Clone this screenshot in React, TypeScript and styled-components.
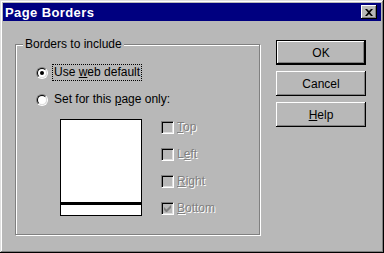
import React from 'react';
import styled, { createGlobalStyle } from 'styled-components';

const GlobalStyle = createGlobalStyle`
  html, body {
    margin: 0;
    padding: 0;
    background: #b8b8b8;
  }
  body {
    font-family: "Liberation Sans", Arial, sans-serif;
    font-size: 12px;
    color: #000;
  }
`;

// 창 전체 (Win95 스타일 테두리)
const Window = styled.div`
  width: 384px;
  height: 253px;
  box-sizing: border-box;
  padding: 3px;
  background: #b8b8b8;
  box-shadow: inset -1px -1px #000, inset 1px 1px #dfdfdf, inset -2px -2px #808080,
    inset 2px 2px #fff;
  display: flex;
  flex-direction: column;
`;

const TitleBar = styled.div`
  height: 18px;
  background: #000080;
  display: flex;
  align-items: center;
  justify-content: space-between;
  padding: 0 4px 0 2px;
`;

const Title = styled.span`
  color: #fff;
  font-weight: bold;
  font-size: 13px;
  letter-spacing: 0.4px;
`;

const CloseButton = styled.div`
  width: 16px;
  height: 14px;
  box-sizing: border-box;
  background: #b8b8b8;
  box-shadow: inset -1px -1px #000, inset 1px 1px #fff, inset -2px -2px #808080;
  display: flex;
  align-items: center;
  justify-content: center;
`;

const Body = styled.div`
  flex: 1;
  display: flex;
  align-items: flex-start;
  padding: 19px 0 0 12px;
`;

const GroupBox = styled.div`
  position: relative;
  margin-top: 4px;
  width: 245px;
  height: 191px;
  box-sizing: border-box;
  border: 1px solid #808080;
  box-shadow: inset 1px 1px #fff, 1px 1px #fff;
  padding: 19px 0 0 20px;
  display: flex;
  flex-direction: column;
`;

const Legend = styled.span`
  position: absolute;
  top: -8px;
  left: 7px;
  padding: 0 2px;
  background: #b8b8b8;
  line-height: 14px;
`;

const OptionRow = styled.div<{ gap?: number }>`
  display: flex;
  align-items: center;
  height: 17px;
  margin-bottom: ${({ gap }) => gap ?? 0}px;
`;

const RadioOuter = styled.div`
  width: 12px;
  height: 12px;
  box-sizing: border-box;
  border-radius: 50%;
  border: 1px solid;
  border-color: #808080 #fff #fff #808080;
  display: flex;
  margin-right: 4px;
`;

const RadioInner = styled.div`
  flex: 1;
  border-radius: 50%;
  border: 1px solid;
  border-color: #000 #dfdfdf #dfdfdf #000;
  background: #fff;
  display: flex;
  align-items: center;
  justify-content: center;
`;

const Dot = styled.div`
  width: 4px;
  height: 4px;
  border-radius: 50%;
  background: #000;
`;

const Label = styled.span<{ focused?: boolean }>`
  padding: 0 1px;
  line-height: 15px;
  border: 1px dotted ${({ focused }) => (focused ? '#000' : 'transparent')};
`;

const Key = styled.span`
  text-decoration: underline;
`;

const PreviewRow = styled.div`
  display: flex;
  margin-top: 11px;
  padding-left: 24px;
`;

const Preview = styled.div`
  width: 82px;
  height: 97px;
  box-sizing: border-box;
  border: 1px solid #000;
  background: #fff;
  display: flex;
  flex-direction: column;
  justify-content: flex-end;
`;

const BottomLine = styled.div`
  height: 3px;
  background: #000;
  margin-bottom: 10px;
`;

const CheckList = styled.div`
  display: flex;
  flex-direction: column;
  gap: 14px;
  margin: 2px 0 0 19px;
`;

const CheckRow = styled.div`
  display: flex;
  align-items: center;
  height: 13px;
`;

const CheckBox = styled.div`
  width: 13px;
  height: 13px;
  box-sizing: border-box;
  border: 1px solid;
  border-color: #808080 #fff #fff #808080;
  box-shadow: inset 1px 1px #000, inset -1px -1px #dfdfdf;
  background: #b8b8b8;
  display: flex;
  align-items: center;
  justify-content: center;
  margin-right: 3px;
`;

const DisabledText = styled.span`
  color: #808080;
  text-shadow: 1px 1px 0 #fff;
  line-height: 13px;
`;

const ButtonColumn = styled.div`
  display: flex;
  flex-direction: column;
  gap: 6px;
  margin-left: 16px;
`;

const Button = styled.div<{ isDefault?: boolean }>`
  width: 90px;
  height: 25px;
  box-sizing: border-box;
  display: flex;
  align-items: center;
  justify-content: center;
  border: ${({ isDefault }) => (isDefault ? '1px solid #000' : 'none')};
  box-shadow: inset -1px -1px #000, inset 1px 1px #fff, inset -2px -2px #808080;
  background: #b8b8b8;
`;

const App: React.FC = () => {
  const sides = [
    { pre: '', key: 'T', post: 'op', checked: false },
    { pre: 'L', key: 'e', post: 'ft', checked: false },
    { pre: '', key: 'R', post: 'ight', checked: false },
    { pre: '', key: 'B', post: 'ottom', checked: true },
  ];

  return (
    <>
      <GlobalStyle />
      <Window>
        <TitleBar>
          <Title>Page Borders</Title>
          <CloseButton>
            <svg width="8" height="7" viewBox="0 0 8 7">
              <path d="M0 0h2l2 2 2-2h2L5 3.5 8 7H6L4 5 2 7H0l3-3.5z" fill="#000" />
            </svg>
          </CloseButton>
        </TitleBar>

        <Body>
          <GroupBox>
            <Legend>Borders to include</Legend>

            <OptionRow gap={10}>
              <RadioOuter>
                <RadioInner>
                  <Dot />
                </RadioInner>
              </RadioOuter>
              <Label focused>
                Use <Key>w</Key>eb default
              </Label>
            </OptionRow>

            <OptionRow>
              <RadioOuter>
                <RadioInner />
              </RadioOuter>
              <Label>
                Set for this <Key>p</Key>age only:
              </Label>
            </OptionRow>

            <PreviewRow>
              <Preview>
                <BottomLine />
              </Preview>
              <CheckList>
                {sides.map((s) => (
                  <CheckRow key={s.post}>
                    <CheckBox>
                      {s.checked && (
                        <svg width="7" height="7" viewBox="0 0 7 7">
                          <path
                            d="M0 2v3l2 2h1l4-4V0L2.5 4.5z"
                            fill="#808080"
                          />
                        </svg>
                      )}
                    </CheckBox>
                    <DisabledText>
                      {s.pre}
                      <Key>{s.key}</Key>
                      {s.post}
                    </DisabledText>
                  </CheckRow>
                ))}
              </CheckList>
            </PreviewRow>
          </GroupBox>

          <ButtonColumn>
            <Button isDefault>OK</Button>
            <Button>Cancel</Button>
            <Button>
              <span>
                <Key>H</Key>elp
              </span>
            </Button>
          </ButtonColumn>
        </Body>
      </Window>
    </>
  );
};

export default App;
